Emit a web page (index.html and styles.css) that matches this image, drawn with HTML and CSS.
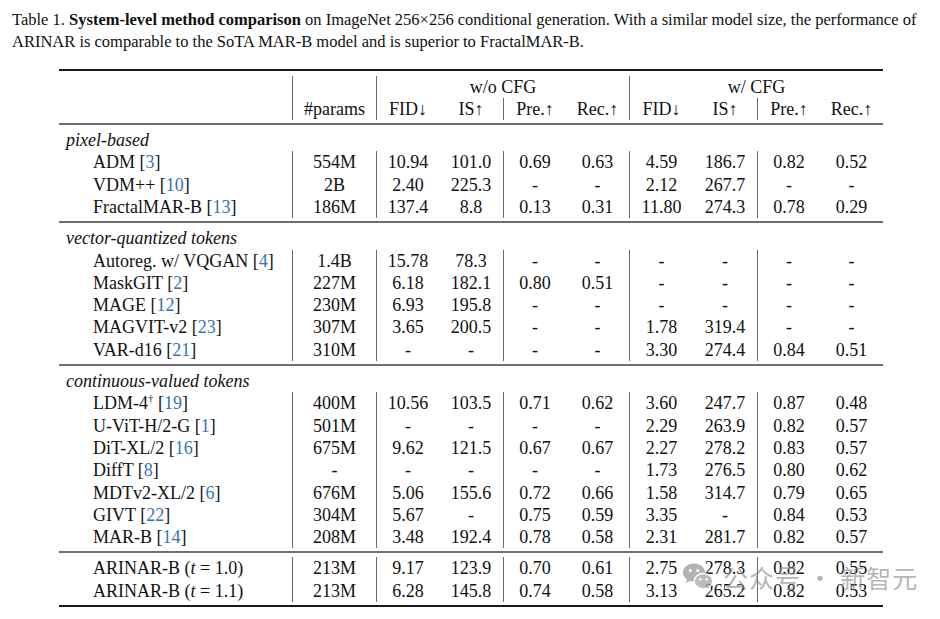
FILE: index.html
```html
<!DOCTYPE html>
<html>
<head>
<meta charset="utf-8">
<link rel="stylesheet" href="styles.css">
</head>
<body>
<div class="page">
  <p class="caption">Table 1. <b>System-level method comparison</b> on ImageNet 256×256 conditional generation. With a similar model size, the performance of<br>ARINAR is comparable to the SoTA MAR-B model and is superior to FractalMAR-B.</p>

  <table class="results">
    <colgroup>
      <col class="c-name"><col class="c-params">
      <col class="c-num"><col class="c-num2"><col class="c-num"><col class="c-num">
      <col class="c-num2"><col class="c-num2"><col class="c-num"><col class="c-num">
    </colgroup>
    <tbody>
      <tr class="rule heavy"><td colspan="10"></td></tr>
      <tr class="gap-b"><td colspan="10"></td></tr>
      <tr class="row">
        <td></td><td class="vl"></td>
        <td class="vl" colspan="4">w/o CFG</td>
        <td class="vl" colspan="4">w/ CFG</td>
      </tr>
      <tr class="row">
        <td></td><td class="vl">#params</td>
        <td class="vl">FID↓</td><td>IS↑</td><td class="vl">Pre.↑</td><td>Rec.↑</td>
        <td class="vl">FID↓</td><td>IS↑</td><td class="vl">Pre.↑</td><td>Rec.↑</td>
      </tr>
      <tr class="gap-a"><td colspan="10"></td></tr>
      <tr class="rule"><td colspan="10"></td></tr>
      <tr class="gap-b"><td colspan="10"></td></tr>

      <tr class="row section"><td colspan="10">pixel-based</td></tr>
      <tr class="row"><td class="name">ADM <span class="ref">[<a>3</a>]</span></td><td class="vl">554M</td><td class="vl">10.94</td><td>101.0</td><td class="vl">0.69</td><td>0.63</td><td class="vl">4.59</td><td>186.7</td><td class="vl">0.82</td><td>0.52</td></tr>
      <tr class="row"><td class="name">VDM++ <span class="ref">[<a>10</a>]</span></td><td class="vl">2B</td><td class="vl">2.40</td><td>225.3</td><td class="vl">-</td><td>-</td><td class="vl">2.12</td><td>267.7</td><td class="vl">-</td><td>-</td></tr>
      <tr class="row"><td class="name">FractalMAR-B <span class="ref">[<a>13</a>]</span></td><td class="vl">186M</td><td class="vl">137.4</td><td>8.8</td><td class="vl">0.13</td><td>0.31</td><td class="vl">11.80</td><td>274.3</td><td class="vl">0.78</td><td>0.29</td></tr>
      <tr class="gap-a"><td colspan="10"></td></tr>
      <tr class="rule"><td colspan="10"></td></tr>
      <tr class="gap-b"><td colspan="10"></td></tr>

      <tr class="row section"><td colspan="10">vector-quantized tokens</td></tr>
      <tr class="row"><td class="name">Autoreg. w/ VQGAN <span class="ref">[<a>4</a>]</span></td><td class="vl">1.4B</td><td class="vl">15.78</td><td>78.3</td><td class="vl">-</td><td>-</td><td class="vl">-</td><td>-</td><td class="vl">-</td><td>-</td></tr>
      <tr class="row"><td class="name">MaskGIT <span class="ref">[<a>2</a>]</span></td><td class="vl">227M</td><td class="vl">6.18</td><td>182.1</td><td class="vl">0.80</td><td>0.51</td><td class="vl">-</td><td>-</td><td class="vl">-</td><td>-</td></tr>
      <tr class="row"><td class="name">MAGE <span class="ref">[<a>12</a>]</span></td><td class="vl">230M</td><td class="vl">6.93</td><td>195.8</td><td class="vl">-</td><td>-</td><td class="vl">-</td><td>-</td><td class="vl">-</td><td>-</td></tr>
      <tr class="row"><td class="name">MAGVIT-v2 <span class="ref">[<a>23</a>]</span></td><td class="vl">307M</td><td class="vl">3.65</td><td>200.5</td><td class="vl">-</td><td>-</td><td class="vl">1.78</td><td>319.4</td><td class="vl">-</td><td>-</td></tr>
      <tr class="row"><td class="name">VAR-d16 <span class="ref">[<a>21</a>]</span></td><td class="vl">310M</td><td class="vl">-</td><td>-</td><td class="vl">-</td><td>-</td><td class="vl">3.30</td><td>274.4</td><td class="vl">0.84</td><td>0.51</td></tr>
      <tr class="gap-a"><td colspan="10"></td></tr>
      <tr class="rule"><td colspan="10"></td></tr>
      <tr class="gap-b"><td colspan="10"></td></tr>

      <tr class="row section"><td colspan="10">continuous-valued tokens</td></tr>
      <tr class="row"><td class="name">LDM-4<sup>†</sup> <span class="ref">[<a>19</a>]</span></td><td class="vl">400M</td><td class="vl">10.56</td><td>103.5</td><td class="vl">0.71</td><td>0.62</td><td class="vl">3.60</td><td>247.7</td><td class="vl">0.87</td><td>0.48</td></tr>
      <tr class="row"><td class="name">U-ViT-H/2-G <span class="ref">[<a>1</a>]</span></td><td class="vl">501M</td><td class="vl">-</td><td>-</td><td class="vl">-</td><td>-</td><td class="vl">2.29</td><td>263.9</td><td class="vl">0.82</td><td>0.57</td></tr>
      <tr class="row"><td class="name">DiT-XL/2 <span class="ref">[<a>16</a>]</span></td><td class="vl">675M</td><td class="vl">9.62</td><td>121.5</td><td class="vl">0.67</td><td>0.67</td><td class="vl">2.27</td><td>278.2</td><td class="vl">0.83</td><td>0.57</td></tr>
      <tr class="row"><td class="name">DiffT <span class="ref">[<a>8</a>]</span></td><td class="vl">-</td><td class="vl">-</td><td>-</td><td class="vl">-</td><td>-</td><td class="vl">1.73</td><td>276.5</td><td class="vl">0.80</td><td>0.62</td></tr>
      <tr class="row"><td class="name">MDTv2-XL/2 <span class="ref">[<a>6</a>]</span></td><td class="vl">676M</td><td class="vl">5.06</td><td>155.6</td><td class="vl">0.72</td><td>0.66</td><td class="vl">1.58</td><td>314.7</td><td class="vl">0.79</td><td>0.65</td></tr>
      <tr class="row"><td class="name">GIVT <span class="ref">[<a>22</a>]</span></td><td class="vl">304M</td><td class="vl">5.67</td><td>-</td><td class="vl">0.75</td><td>0.59</td><td class="vl">3.35</td><td>-</td><td class="vl">0.84</td><td>0.53</td></tr>
      <tr class="row"><td class="name">MAR-B <span class="ref">[<a>14</a>]</span></td><td class="vl">208M</td><td class="vl">3.48</td><td>192.4</td><td class="vl">0.78</td><td>0.58</td><td class="vl">2.31</td><td>281.7</td><td class="vl">0.82</td><td>0.57</td></tr>
      <tr class="gap-a"><td colspan="10"></td></tr>
      <tr class="rule"><td colspan="10"></td></tr>
      <tr class="gap-b"><td colspan="10"></td></tr>

      <tr class="row"><td class="name">ARINAR-B (<i>t</i> = 1.0)</td><td class="vl">213M</td><td class="vl">9.17</td><td>123.9</td><td class="vl">0.70</td><td>0.61</td><td class="vl">2.75</td><td>278.3</td><td class="vl">0.82</td><td>0.55</td></tr>
      <tr class="row"><td class="name">ARINAR-B (<i>t</i> = 1.1)</td><td class="vl">213M</td><td class="vl">6.28</td><td>145.8</td><td class="vl">0.74</td><td>0.58</td><td class="vl">3.13</td><td>265.2</td><td class="vl">0.82</td><td>0.53</td></tr>
      <tr class="gap-a"><td colspan="10"></td></tr>
      <tr class="rule heavy"><td colspan="10"></td></tr>
    </tbody>
  </table>

  <div class="watermark">
    <svg class="wm-logo" width="32" height="30" viewBox="0 0 32 30">
      <path d="M12 1.5C5.7 1.5 1 5.6 1 10.6c0 2.8 1.5 5.2 3.9 6.9L4 21l4-2.1c1.2.3 2.5.5 4 .5 6.1 0 11-4.1 11-9.200S18.1 1.5 12 1.5z" fill="#9a9a9a"/>
      <circle cx="8.3" cy="8.6" r="1.5" fill="#fff"/>
      <circle cx="15.7" cy="8.6" r="1.5" fill="#fff"/>
      <path d="M21.5 11.5c-5.2 0-9.3 3.4-9.3 7.7s4.1 7.7 9.3 7.7c1.1 0 2.2-.2 3.2-.5l3.4 1.8-.8-3c2-1.4 3.5-3.6 3.5-6 0-4.300-4.1-7.700-9.3-7.700z" fill="#a6a6a6" stroke="#fff" stroke-width="1.4"/>
      <circle cx="18.4" cy="17.4" r="1.2" fill="#fff"/>
      <circle cx="24.6" cy="17.4" r="1.2" fill="#fff"/>
    </svg>
    <span class="wm-text">公众号 · 新智元</span>
  </div>
</div>
</body>
</html>
```

FILE: styles.css
```css
html, body {
  margin: 0;
  padding: 0;
  background: #fff;
}

.page {
  position: relative;
  width: 940px;
  height: 619px;
  font-family: "Liberation Serif", "Times New Roman", serif;
  color: #111;
}

.caption {
  margin: 0;
  padding: 9px 0 0 12px;
  font-size: 16.5px;
  line-height: 22px;
  white-space: nowrap;
}

.caption b {
  font-weight: bold;
}

.results {
  margin: 16px 0 0 59px;
  width: 824px;
  table-layout: fixed;
  border-collapse: separate;
  border-spacing: 0;
  font-size: 18px;
}

.c-name { width: 233px; }
.c-params { width: 84px; }
.c-num { width: 63px; }
.c-num2 { width: 64px; }

.results td {
  padding: 0;
  text-align: center;
  white-space: nowrap;
}

.row td {
  height: 22.3px;
  line-height: 22.3px;
}

.vl {
  border-left: 1.3px solid #6a6a6a;
}

.results td.name {
  text-align: left;
  padding-left: 34px;
}

.section td {
  text-align: left;
  font-style: italic;
  padding-left: 7px;
}

.rule td {
  height: 1.5px;
  background: #6f6f6f;
}

.rule.heavy td {
  height: 2px;
  background: #1a1a1a;
}

.gap-a td {
  height: 3px;
}

.gap-b td {
  height: 4.5px;
}

.ref a {
  color: #3473b8;
}

sup {
  font-size: 11px;
  line-height: 0;
  vertical-align: 7px;
}

.watermark {
  position: absolute;
  left: 682px;
  top: 562px;
  display: flex;
  align-items: center;
  gap: 9px;
  opacity: 0.75;
}

.wm-logo {
  display: block;
}

.wm-text {
  font-family: "Noto Sans CJK SC", "Noto Sans", sans-serif;
  font-size: 25px;
  line-height: 30px;
  color: rgba(140, 140, 140, 0.85);
  letter-spacing: 1px;
}
```
